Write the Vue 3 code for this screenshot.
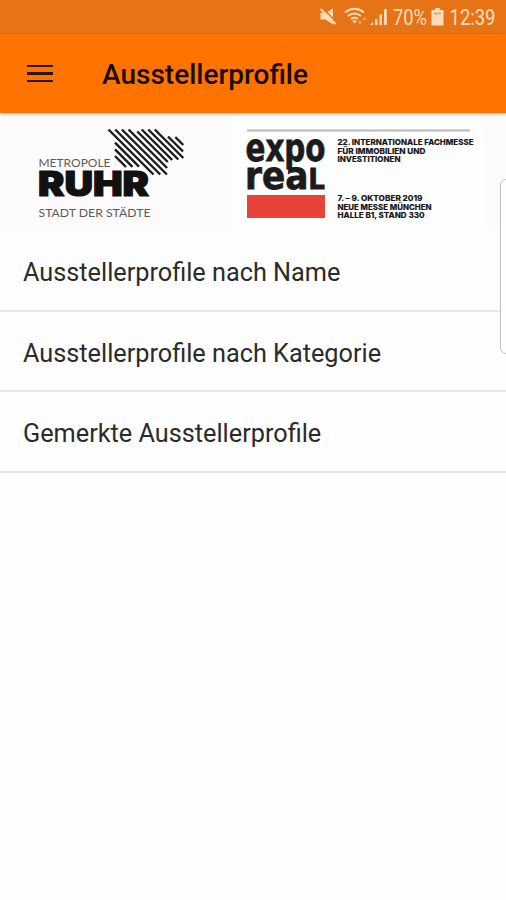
<template>
  <div class="app">
    <div class="status-bar">
      <svg width="186" height="34" viewBox="320 0 186 34">
        <!-- muted speaker -->
        <path class="fill" d="M320.500 13h5l7.500-4.500v16l-7.500-5h-5z" />
        <path class="cut" d="M322 7.500l15 15" />
        <path class="line" d="M320.500 9l15 15" />
        <!-- wifi -->
        <path class="line" d="M345 12.500q9.500-7.500 19 0M348 16q6.500-5 13 0M351 19q3.500-2.500 7 0" />
        <path class="fill" d="M352 20.500h5l-2.500 3z" />
        <path class="faint" d="M357.500 21.500h4.500l-2 3zM362.500 20h4l-2-3.500z" />
        <!-- signal -->
        <path class="fill" d="M370 25l3-3v3zM375 19h2.500v6H375zM379.500 14.500h2.500V25h-2.500zM384 9h2.800v16H384z" />
        <text x="393" y="25" textLength="34" lengthAdjust="spacingAndGlyphs">70%</text>
        <!-- battery -->
        <path class="fill" d="M435 8h5v2h3.500v15.500h-12V10h3.500z" />
        <path class="level" d="M434 12.500h7v2h-7z" />
        <text x="449.500" y="25" textLength="46" lengthAdjust="spacingAndGlyphs">12:39</text>
      </svg>
    </div>

    <header class="toolbar">
      <button class="menu-button" aria-label="Menü">
        <span></span>
        <span></span>
        <span></span>
      </button>
      <h1>Ausstellerprofile</h1>
    </header>

    <div class="banner">
      <svg width="506" height="117" viewBox="0 113 506 117">
        <rect x="0" y="113" width="232" height="117" fill="#fdfbfb" />
        <rect x="484" y="113" width="22" height="117" fill="#fdfbfb" />

        <!-- Metropole Ruhr -->
        <path class="hatch" :d="hatch" />
        <text class="thin" x="38.500" y="167" font-size="11.500" textLength="72" lengthAdjust="spacingAndGlyphs">METROPOLE</text>
        <text class="ruhr" x="38" y="196.300" font-size="34" textLength="111" lengthAdjust="spacingAndGlyphs">RUHR</text>
        <text class="thin" x="38.500" y="216.700" font-size="11.500" textLength="112" lengthAdjust="spacingAndGlyphs">STADT DER STÄDTE</text>

        <!-- Expo Real -->
        <rect x="247" y="129.500" width="223" height="2" fill="#b9b9b9" />
        <text class="expo" x="245.500" y="161.300" font-size="38" textLength="80" lengthAdjust="spacingAndGlyphs">expo</text>
        <text class="expo" x="245" y="189" font-size="38" textLength="80" lengthAdjust="spacingAndGlyphs">rea<tspan font-size="29">L</tspan></text>
        <rect x="247" y="195" width="78" height="23" fill="#e8433a" />
        <text
            v-for="line in fairLines"
            :key="line.text"
            class="fair"
            x="337.500"
            :y="line.y"
            :textLength="line.width"
            lengthAdjust="spacingAndGlyphs"
        >{{ line.text }}</text>
      </svg>
    </div>

    <ul class="menu-list">
      <li v-for="item in items" :key="item">{{ item }}</li>
    </ul>

    <div class="edge-handle"></div>
  </div>
</template>

<script setup>
const items = [
  'Ausstellerprofile nach Name',
  'Ausstellerprofile nach Kategorie',
  'Gemerkte Ausstellerprofile'
]

const fairLines = [
  { text: '22. INTERNATIONALE FACHMESSE', y: 145, width: 136 },
  { text: 'FÜR IMMOBILIEN UND', y: 153.7, width: 88 },
  { text: 'INVESTITIONEN', y: 162.3, width: 63 },
  { text: '7. – 9. OKTOBER 2019', y: 200.7, width: 85 },
  { text: 'NEUE MESSE MÜNCHEN', y: 209.5, width: 94 },
  { text: 'HALLE B1, STAND 330', y: 218, width: 87 }
]

// Diagonal strokes: start x, start y, length along each axis
const strokes = [
  [115, 156, 11],
  [115, 149.4, 17.5],
  [115, 142.7, 24],
  [108.5, 129.5, 45],
  [115.2, 129.5, 45],
  [121.9, 129.5, 45],
  [128.6, 129.5, 38.5],
  [137.3, 131.5, 30.5],
  [141.7, 129.5, 30.5],
  [148.3, 129.5, 30],
  [154.8, 129.5, 28.5],
  [168, 136.5, 15],
  [175.3, 137, 8]
]
const hatch = strokes.map(([x, y, len]) => `M${x} ${y}l${len} ${len}`).join('')
</script>

<style>
body {
  margin: 0;
  background: #fff;
}
</style>

<style scoped>
.app {
  position: relative;
  height: 900px;
  overflow: hidden;
  background: #fefefe;
  font-family: Roboto, "Liberation Sans", sans-serif;
}

.status-bar {
  display: flex;
  justify-content: flex-end;
  height: 34px;
  background: #e67417;
}

.status-bar text {
  fill: #ffdcb8;
  font-size: 22px;
}

.fill {
  fill: #ffdcb8;
}

.faint {
  fill: #f3a566;
}

.line {
  fill: none;
  stroke: #ffdcb8;
  stroke-width: 2;
}

.cut {
  stroke: #e67417;
  stroke-width: 1.500;
}

.level {
  fill: #eda269;
}

.toolbar {
  position: relative;
  display: flex;
  align-items: center;
  height: 79px;
  background: #ff7300;
  box-shadow: 0 1px 3px rgba(0, 0, 0, 0.3);
}

.menu-button {
  display: flex;
  flex-direction: column;
  gap: 5px;
  width: 26px;
  margin: 0 49px 0 27px;
  padding: 0;
  border: 0;
  background: none;
}

.menu-button span {
  height: 2.500px;
  background: #2c1503;
}

.toolbar h1 {
  margin: 2px 0 0;
  color: #170b02;
  font-size: 28px;
  font-weight: 500;
}

.banner {
  height: 117px;
}

.banner svg {
  display: block;
}

.hatch {
  fill: none;
  stroke: #1c1c1c;
  stroke-width: 2.400;
}

.thin {
  fill: #5c5c5c;
  font-family: Lato, sans-serif;
}

.ruhr {
  fill: #111;
  stroke: #111;
  stroke-width: 1.200;
  font-family: Inter, sans-serif;
  font-weight: 900;
}

.expo {
  fill: #1b1b1b;
  stroke: #1b1b1b;
  stroke-width: 0.800;
  font-family: "DejaVu Sans", sans-serif;
  font-weight: 700;
}

.fair {
  fill: #161616;
  stroke: #161616;
  stroke-width: 0.100;
  font-family: Inter, sans-serif;
  font-size: 7.500px;
  font-weight: 800;
}

.menu-list {
  margin: 0;
  padding: 1px 0 0;
  list-style: none;
}

.menu-list li {
  display: flex;
  align-items: center;
  box-sizing: border-box;
  height: 80.700px;
  padding: 4.500px 23px 0;
  border-bottom: 2px solid #e7e7e7;
  color: #2b2b2b;
  font-size: 25.270px;
}

.edge-handle {
  position: absolute;
  top: 179px;
  right: -10px;
  box-sizing: border-box;
  width: 16px;
  height: 175px;
  border: 1px solid #c4c0c0;
  border-radius: 6px;
  background: #fefefe;
}
</style>
